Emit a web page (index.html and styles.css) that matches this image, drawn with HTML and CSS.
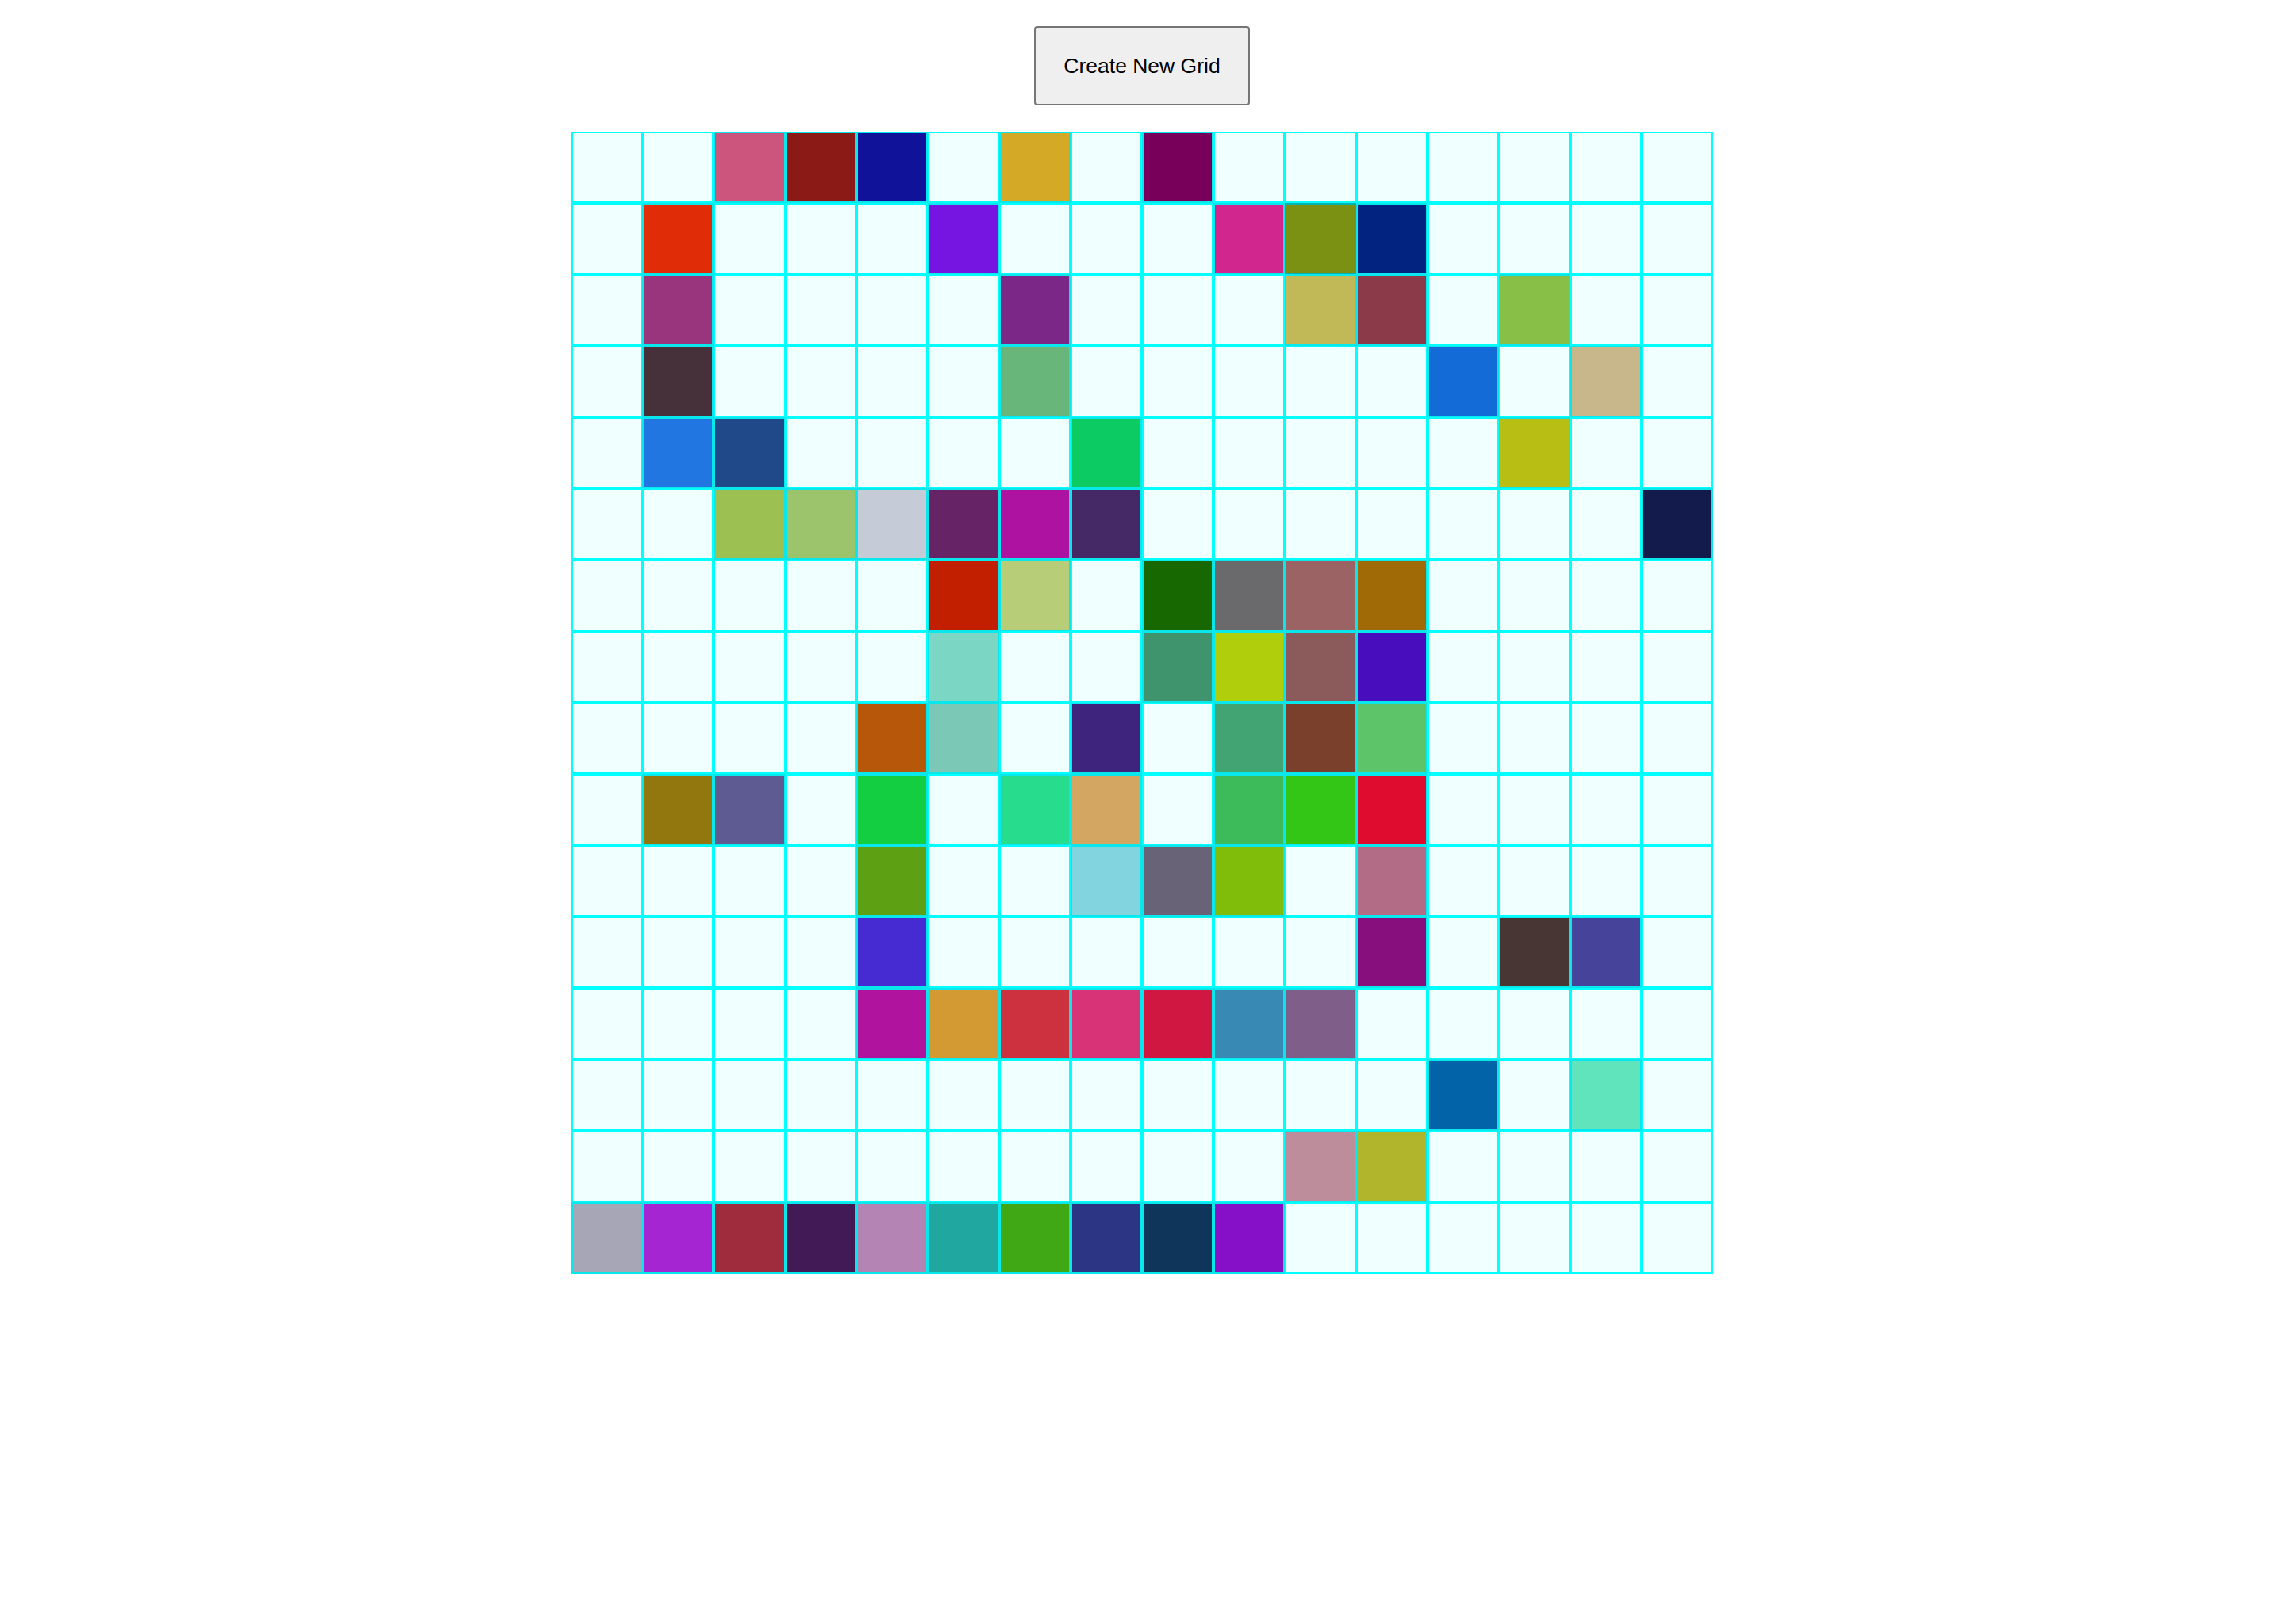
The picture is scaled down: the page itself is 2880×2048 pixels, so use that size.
FILE: index.html
```html
<!DOCTYPE html>
<html lang="en">
<head>
<meta charset="utf-8">
<title>Grid</title>
<link rel="stylesheet" href="styles.css">
</head>
<body>
<main class="page">
<button class="new-grid" type="button">Create New Grid</button>
<div class="grid">
<div class="cell"></div><div class="cell"></div><div class="cell filled" style="background:#cb557d"></div><div class="cell filled" style="background:#8b1a17"></div><div class="cell filled" style="background:#10129a"></div><div class="cell"></div><div class="cell filled" style="background:#d4a926"></div><div class="cell"></div><div class="cell filled" style="background:#78005a"></div><div class="cell"></div><div class="cell"></div><div class="cell"></div><div class="cell"></div><div class="cell"></div><div class="cell"></div><div class="cell"></div>
<div class="cell"></div><div class="cell filled" style="background:#e02d08"></div><div class="cell"></div><div class="cell"></div><div class="cell"></div><div class="cell filled" style="background:#7614e2"></div><div class="cell"></div><div class="cell"></div><div class="cell"></div><div class="cell filled" style="background:#d0268e"></div><div class="cell filled dim" style="background:#7b9114"></div><div class="cell filled" style="background:#022480"></div><div class="cell"></div><div class="cell"></div><div class="cell"></div><div class="cell"></div>
<div class="cell"></div><div class="cell filled" style="background:#98357c"></div><div class="cell"></div><div class="cell"></div><div class="cell"></div><div class="cell"></div><div class="cell filled" style="background:#7a2788"></div><div class="cell"></div><div class="cell"></div><div class="cell"></div><div class="cell filled" style="background:#c1b857"></div><div class="cell filled" style="background:#8a3a48"></div><div class="cell"></div><div class="cell filled" style="background:#88bf46"></div><div class="cell"></div><div class="cell"></div>
<div class="cell"></div><div class="cell filled" style="background:#46303a"></div><div class="cell"></div><div class="cell"></div><div class="cell"></div><div class="cell"></div><div class="cell filled" style="background:#69b67a"></div><div class="cell"></div><div class="cell"></div><div class="cell"></div><div class="cell"></div><div class="cell"></div><div class="cell filled" style="background:#126bd6"></div><div class="cell"></div><div class="cell filled" style="background:#c8b78a"></div><div class="cell"></div>
<div class="cell"></div><div class="cell filled" style="background:#2176e1"></div><div class="cell filled" style="background:#204989"></div><div class="cell"></div><div class="cell"></div><div class="cell"></div><div class="cell"></div><div class="cell filled" style="background:#0ccb63"></div><div class="cell"></div><div class="cell"></div><div class="cell"></div><div class="cell"></div><div class="cell"></div><div class="cell filled" style="background:#b9be14"></div><div class="cell"></div><div class="cell"></div>
<div class="cell"></div><div class="cell"></div><div class="cell filled" style="background:#9cc052"></div><div class="cell filled" style="background:#9cc46c"></div><div class="cell filled" style="background:#c5ccd8"></div><div class="cell filled" style="background:#662366"></div><div class="cell filled" style="background:#ae12a0"></div><div class="cell filled" style="background:#442966"></div><div class="cell"></div><div class="cell"></div><div class="cell"></div><div class="cell"></div><div class="cell"></div><div class="cell"></div><div class="cell"></div><div class="cell filled" style="background:#121b4c"></div>
<div class="cell"></div><div class="cell"></div><div class="cell"></div><div class="cell"></div><div class="cell"></div><div class="cell filled" style="background:#c11f00"></div><div class="cell filled" style="background:#b7cd77"></div><div class="cell"></div><div class="cell filled" style="background:#186802"></div><div class="cell filled" style="background:#6a6a6c"></div><div class="cell filled" style="background:#9c6365"></div><div class="cell filled" style="background:#a06a06"></div><div class="cell"></div><div class="cell"></div><div class="cell"></div><div class="cell"></div>
<div class="cell"></div><div class="cell"></div><div class="cell"></div><div class="cell"></div><div class="cell"></div><div class="cell filled" style="background:#7bd6c4"></div><div class="cell"></div><div class="cell"></div><div class="cell filled" style="background:#3f946e"></div><div class="cell filled" style="background:#b0ce0b"></div><div class="cell filled" style="background:#8b5a5a"></div><div class="cell filled" style="background:#480dbc"></div><div class="cell"></div><div class="cell"></div><div class="cell"></div><div class="cell"></div>
<div class="cell"></div><div class="cell"></div><div class="cell"></div><div class="cell"></div><div class="cell filled" style="background:#b7570a"></div><div class="cell filled" style="background:#7cc8b6"></div><div class="cell"></div><div class="cell filled" style="background:#3e247c"></div><div class="cell"></div><div class="cell filled" style="background:#42a472"></div><div class="cell filled" style="background:#7b402c"></div><div class="cell filled" style="background:#5ec46a"></div><div class="cell"></div><div class="cell"></div><div class="cell"></div><div class="cell"></div>
<div class="cell"></div><div class="cell filled" style="background:#92760e"></div><div class="cell filled" style="background:#5e5a92"></div><div class="cell"></div><div class="cell filled" style="background:#12ce40"></div><div class="cell"></div><div class="cell filled" style="background:#28dc8e"></div><div class="cell filled" style="background:#d3a762"></div><div class="cell"></div><div class="cell filled" style="background:#3dbb5a"></div><div class="cell filled" style="background:#33c616"></div><div class="cell filled" style="background:#e00c30"></div><div class="cell"></div><div class="cell"></div><div class="cell"></div><div class="cell"></div>
<div class="cell"></div><div class="cell"></div><div class="cell"></div><div class="cell"></div><div class="cell filled" style="background:#5ea014"></div><div class="cell"></div><div class="cell"></div><div class="cell filled" style="background:#82d4de"></div><div class="cell filled" style="background:#696378"></div><div class="cell filled" style="background:#80bc0a"></div><div class="cell"></div><div class="cell filled" style="background:#b26c86"></div><div class="cell"></div><div class="cell"></div><div class="cell"></div><div class="cell"></div>
<div class="cell"></div><div class="cell"></div><div class="cell"></div><div class="cell"></div><div class="cell filled" style="background:#462ad2"></div><div class="cell"></div><div class="cell"></div><div class="cell"></div><div class="cell"></div><div class="cell"></div><div class="cell"></div><div class="cell filled" style="background:#870f7d"></div><div class="cell"></div><div class="cell filled" style="background:#473634"></div><div class="cell filled" style="background:#46439a"></div><div class="cell"></div>
<div class="cell"></div><div class="cell"></div><div class="cell"></div><div class="cell"></div><div class="cell filled" style="background:#b0139e"></div><div class="cell filled" style="background:#d39a34"></div><div class="cell filled" style="background:#cd303f"></div><div class="cell filled" style="background:#d93377"></div><div class="cell filled" style="background:#cf1741"></div><div class="cell filled" style="background:#3889b3"></div><div class="cell filled" style="background:#7f5e89"></div><div class="cell"></div><div class="cell"></div><div class="cell"></div><div class="cell"></div><div class="cell"></div>
<div class="cell"></div><div class="cell"></div><div class="cell"></div><div class="cell"></div><div class="cell"></div><div class="cell"></div><div class="cell"></div><div class="cell"></div><div class="cell"></div><div class="cell"></div><div class="cell"></div><div class="cell"></div><div class="cell filled" style="background:#0363a8"></div><div class="cell"></div><div class="cell filled" style="background:#5fe4bb"></div><div class="cell"></div>
<div class="cell"></div><div class="cell"></div><div class="cell"></div><div class="cell"></div><div class="cell"></div><div class="cell"></div><div class="cell"></div><div class="cell"></div><div class="cell"></div><div class="cell"></div><div class="cell filled" style="background:#be8d9b"></div><div class="cell filled" style="background:#b1b52b"></div><div class="cell"></div><div class="cell"></div><div class="cell"></div><div class="cell"></div>
<div class="cell filled" style="background:#a7a6b6"></div><div class="cell filled" style="background:#a525d2"></div><div class="cell filled" style="background:#9e2c3c"></div><div class="cell filled" style="background:#421b56"></div><div class="cell filled" style="background:#b484b4"></div><div class="cell filled" style="background:#1fa7a0"></div><div class="cell filled" style="background:#40a815"></div><div class="cell filled" style="background:#2c3584"></div><div class="cell filled" style="background:#0f355a"></div><div class="cell filled" style="background:#860fc8"></div><div class="cell"></div><div class="cell"></div><div class="cell"></div><div class="cell"></div><div class="cell"></div><div class="cell"></div>
</div>
</main>
</body>
</html>
```

FILE: styles.css
```css
html, body {
  margin: 0;
  padding: 0;
  background: #ffffff;
}

.page {
  display: flex;
  flex-direction: column;
  align-items: center;
  gap: 33px;
  padding-top: 33px;
  font-family: "Liberation Sans", Arial, sans-serif;
}

.new-grid {
  font-family: "Liberation Sans", Arial, sans-serif;
  font-size: 26.5px;
  line-height: 30px;
  color: #000000;
  background: #efefef;
  border: 2px solid #767676;
  border-radius: 4px;
  padding: 33px 35px;
  margin: 0;
  cursor: pointer;
}

.grid {
  display: grid;
  grid-template-columns: repeat(16, 90px);
  grid-auto-rows: 90px;
}

.cell {
  box-sizing: border-box;
  border: 2px solid #00ffff;
  background: #f0ffff;
}

.cell.filled {
  border-color: #08e8ec;
}

.cell.filled.dim {
  border-color: #00b2b4;
}
```
